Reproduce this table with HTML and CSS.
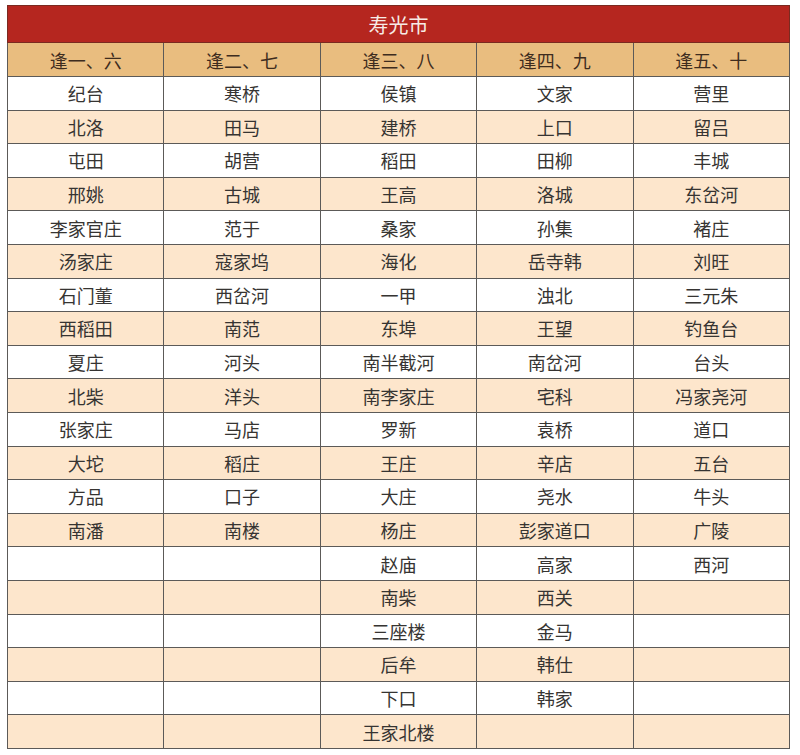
FILE: index.html
```html
<!DOCTYPE html>
<html lang="zh">
<head>
<meta charset="utf-8">
<link rel="stylesheet" href="styles.css">
</head>
<body>
<table class="market">
  <thead>
    <tr class="title-row"><th colspan="5">寿光市</th></tr>
    <tr class="head-row"><th>逢一、六</th><th>逢二、七</th><th>逢三、八</th><th>逢四、九</th><th>逢五、十</th></tr>
  </thead>
  <tbody>
    <tr><td>纪台</td><td>寒桥</td><td>侯镇</td><td>文家</td><td>营里</td></tr>
    <tr><td>北洛</td><td>田马</td><td>建桥</td><td>上口</td><td>留吕</td></tr>
    <tr><td>屯田</td><td>胡营</td><td>稻田</td><td>田柳</td><td>丰城</td></tr>
    <tr><td>邢姚</td><td>古城</td><td>王高</td><td>洛城</td><td>东岔河</td></tr>
    <tr><td>李家官庄</td><td>范于</td><td>桑家</td><td>孙集</td><td>褚庄</td></tr>
    <tr><td>汤家庄</td><td>寇家坞</td><td>海化</td><td>岳寺韩</td><td>刘旺</td></tr>
    <tr><td>石门董</td><td>西岔河</td><td>一甲</td><td>浊北</td><td>三元朱</td></tr>
    <tr><td>西稻田</td><td>南范</td><td>东埠</td><td>王望</td><td>钓鱼台</td></tr>
    <tr><td>夏庄</td><td>河头</td><td>南半截河</td><td>南岔河</td><td>台头</td></tr>
    <tr><td>北柴</td><td>洋头</td><td>南李家庄</td><td>宅科</td><td>冯家尧河</td></tr>
    <tr><td>张家庄</td><td>马店</td><td>罗新</td><td>袁桥</td><td>道口</td></tr>
    <tr><td>大坨</td><td>稻庄</td><td>王庄</td><td>辛店</td><td>五台</td></tr>
    <tr><td>方品</td><td>口子</td><td>大庄</td><td>尧水</td><td>牛头</td></tr>
    <tr><td>南潘</td><td>南楼</td><td>杨庄</td><td>彭家道口</td><td>广陵</td></tr>
    <tr><td></td><td></td><td>赵庙</td><td>高家</td><td>西河</td></tr>
    <tr><td></td><td></td><td>南柴</td><td>西关</td><td></td></tr>
    <tr><td></td><td></td><td>三座楼</td><td>金马</td><td></td></tr>
    <tr><td></td><td></td><td>后牟</td><td>韩仕</td><td></td></tr>
    <tr><td></td><td></td><td>下口</td><td>韩家</td><td></td></tr>
    <tr><td></td><td></td><td>王家北楼</td><td></td><td></td></tr>
  </tbody>
</table>
</body>
</html>
```

FILE: styles.css
```css
html, body {
  margin: 0;
  padding: 0;
  background: #ffffff;
}

body {
  padding: 5px 0 0 7px;
  font-family: "Noto Sans CJK SC", "Noto Sans", sans-serif;
}

.market {
  border-collapse: collapse;
  width: 783px;
  table-layout: fixed;
  color: #363432;
}

.market th,
.market td {
  border: 1.5px solid #5c5a58;
  text-align: center;
  vertical-align: middle;
  padding: 0;
}

.title-row th {
  background: #b5261f;
  color: #f7ebe6;
  font-size: 20px;
  font-weight: 400;
  height: 36px;
  border-color: #7a2a20;
}

.head-row th {
  background: #e9bd7f;
  color: #3e2c1e;
  font-size: 18px;
  font-weight: 400;
  height: 33px;
}

.market td {
  font-size: 18px;
  height: 32.6px;
}

.market tbody tr:nth-child(even) td {
  background: #fde6cc;
}

.market tbody tr:nth-child(odd) td {
  background: #ffffff;
}
```
